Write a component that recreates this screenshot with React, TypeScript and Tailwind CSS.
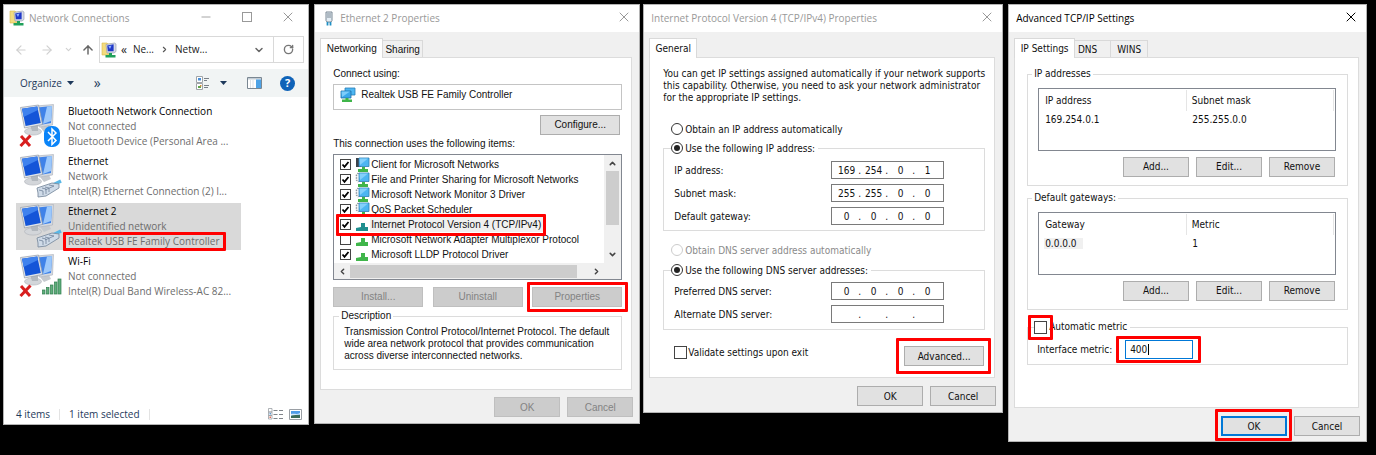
import type { ReactNode } from 'react';
import {
  ArrowLeft,
  ArrowRight,
  ArrowUp,
  ChevronDown,
  ChevronLeft,
  ChevronRight,
  ChevronUp,
  Minus,
  RotateCw,
  X,
} from 'lucide-react';

const SHELL_FONT = "font-['Open_Sans',sans-serif]";
const TAHOMA = "font-['DejaVu_Sans_Condensed','DejaVu_Sans',sans-serif]";
const MS_SANS = "font-['Liberation_Sans',sans-serif]";

type BadgeKind = 'bluetooth' | 'cable' | 'signal';

const adapters: {
  name: string;
  status: string;
  device: string;
  badge: BadgeKind;
  offline?: boolean;
  selected?: boolean;
}[] = [
  {
    name: 'Bluetooth Network Connection',
    status: 'Not connected',
    device: 'Bluetooth Device (Personal Area ...',
    badge: 'bluetooth',
    offline: true,
  },
  { name: 'Ethernet', status: 'Network', device: 'Intel(R) Ethernet Connection (2) I...', badge: 'cable' },
  {
    name: 'Ethernet 2',
    status: 'Unidentified network',
    device: 'Realtek USB FE Family Controller',
    badge: 'cable',
    selected: true,
  },
  {
    name: 'Wi-Fi',
    status: 'Not connected',
    device: 'Intel(R) Dual Band Wireless-AC 82...',
    badge: 'signal',
    offline: true,
  },
];

const items: { label: string; kind: 'client' | 'service' | 'protocol'; checked: boolean; active?: boolean }[] = [
  { label: 'Client for Microsoft Networks', kind: 'client', checked: true },
  { label: 'File and Printer Sharing for Microsoft Networks', kind: 'service', checked: true },
  { label: 'Microsoft Network Monitor 3 Driver', kind: 'service', checked: true },
  { label: 'QoS Packet Scheduler', kind: 'service', checked: true },
  { label: 'Internet Protocol Version 4 (TCP/IPv4)', kind: 'protocol', checked: true, active: true },
  { label: 'Microsoft Network Adapter Multiplexor Protocol', kind: 'protocol', checked: false },
  { label: 'Microsoft LLDP Protocol Driver', kind: 'protocol', checked: true },
];

/* ---------- icons ---------- */

function FolderNetIcon() {
  return (
    <svg viewBox="0 0 16 16" className="size-4 shrink-0">
      <path d="M1 1h5l1 1h3v11H1z" fill="#f3dc7e" stroke="#d9b84a" strokeWidth=".6" />
      <path d="M5 2.5 13.5 1l1.5 1v7.5l-2 1.5H6z" fill="#d6dbe8" stroke="#8d95a8" strokeWidth=".6" />
      <path d="M6.2 3.4 12.6 2.3v6.9H6.8z" fill="#2038c8" />
      <path d="M7.4 4.2 10.6 3.4 9 6.9z" fill="#8fb2ff" />
      <path d="M8 11h3v2h3.5v2.5h-10V13H8z" fill="#1fa05a" />
    </svg>
  );
}

function AdapterIcon({ badge, offline }: { badge: BadgeKind; offline?: boolean }) {
  return (
    <svg viewBox="0 0 46 46" className="h-[46px] w-[46px] shrink-0">
      <ellipse cx="15" cy="28.500" rx="8.500" ry="3.600" fill="#d3d6da" stroke="#aeb2b8" strokeWidth=".6" />
      <path d="M12 22h8v6h-6z" fill="#b3b8be" />
      <path d="m22 24 9-2 2 4-7 3z" fill="#c5c9ce" />
      <path d="M18 3 35.500 1.500 34.500 22 21 24z" fill="#d5dae0" stroke="#a9afb8" strokeWidth=".6" />
      <path d="M19.500 4.500 34 3 33 20 22 22z" fill="#3f82e8" />
      <path d="M29 3.500 34 3 33 18 25 21z" fill="#9cc8fb" />
      <path d="M2.500 4.500 20.500 2 24.500 21.500 6.500 25z" fill="#e2e6ea" stroke="#959ca6" strokeWidth=".7" />
      <path d="M4 5.800 19.300 3.600 22.800 20 7.600 23z" fill="#1455d8" />
      <path d="M4 5.800 19.300 3.600 20 7 5.600 14z" fill="#3f82ee" />
      {badge === 'bluetooth' && (
        <>
          <rect x="26" y="23" width="16" height="21" rx="7" fill="#0a84f8" />
          <path d="m30 29 8 8.500-4 4V26l4 4-8 8" fill="none" stroke="#fff" strokeWidth="1.500" />
        </>
      )}
      {badge === 'cable' && (
        <>
          <path d="m35 32 8-4" stroke="#58b7e6" strokeWidth="3.500" />
          <path d="m19 35 15-5 7 1v4l-13 8-8 1v-4z" fill="#cfdbe8" stroke="#7d8da0" strokeWidth=".9" />
          <path
            d="m21 37 4 1v4M24 35l4 1v5M27 34l4 1v4M31 32l5 1-9 4"
            fill="none"
            stroke="#71839a"
            strokeWidth=".8"
          />
        </>
      )}
      {badge === 'signal' && (
        <g fill="#5fae7b" stroke="#2f7d4d" strokeWidth=".7">
          <rect x="24.500" y="37" width="2.500" height="4" />
          <rect x="28.500" y="34.500" width="2.500" height="6.500" />
          <rect x="32.500" y="32" width="2.500" height="9" />
          <rect x="36.500" y="29" width="2.500" height="12" />
          <rect x="40" y="26" width="3" height="15" />
        </g>
      )}
      {offline && <path d="m3 33 9 10M12.500 32.500 2.500 43" stroke="#d81e1e" strokeWidth="3" />}
    </svg>
  );
}

function ItemIcon({ kind, active }: { kind: 'client' | 'service' | 'protocol'; active?: boolean }) {
  if (kind === 'protocol') {
    return (
      <svg viewBox="0 0 15 15" className="size-[15px] shrink-0">
        <path d="M6 6h4v4h3v4H1v-3l5-1z" fill={active ? '#1f8f8f' : '#3fb54a'} />
      </svg>
    );
  }
  return (
    <svg viewBox="0 0 15 15" className="size-[15px] shrink-0">
      {kind === 'client' ? (
        <path d="M1 1h5v9H1z" fill="#3c434b" />
      ) : (
        <path d="M3.500 1 1.500 3v5l2 2" fill="none" stroke="#8c949c" strokeWidth="1.500" strokeDasharray="1.500 1" />
      )}
      <path d="M4 1h10v8.500H4z" fill="#4db6f2" stroke="#2d7db4" strokeWidth=".8" />
      <path d="M4.500 1.500H13L5 8z" fill="#83d0fb" />
      <path d="M7 10h3v2h3v3H3v-3h4z" fill="#3fb54a" />
    </svg>
  );
}

function AdapterSmallIcon() {
  return (
    <svg viewBox="0 0 16 16" className="size-4 shrink-0">
      <path d="M5 1h10v7H5z" fill="#4db6f2" stroke="#2a7fb8" strokeWidth=".8" />
      <path d="M1 4h10v7H1z" fill="#3ba7ea" stroke="#1f6fa8" strokeWidth=".8" />
      <path d="M1.500 4.500H10L2 10z" fill="#7dcdfb" />
      <path d="M5.500 11h3v1.500H12V15H2v-2.500h3.500z" fill="#3fb54a" />
    </svg>
  );
}

function PlugIcon() {
  return (
    <svg viewBox="0 0 14 16" className="h-4 w-[14px] shrink-0">
      <path d="M4 1h6v8.500L9 11H5L4 9.500z" fill="#e4edf4" stroke="#7a8894" />
      <path d="M6 2v5M8 2v5" stroke="#7a8894" />
      <path d="M5.500 11v3.500M8.500 11v3.500" stroke="#1f8fc4" strokeWidth="1.800" />
    </svg>
  );
}

function ViewIcon() {
  return (
    <svg viewBox="0 0 14 14" className="size-[14px]">
      <path d="M.5.5h6v6h-6zM.5 7.500h6v6h-6z" fill="#fff" stroke="#a0a4a8" />
      <path d="M2 2h3v2.500H2z" fill="#4a90d9" />
      <path d="M2 10h3v2H2z" fill="#5da548" />
      <path d="M4 9h1.500v1.500H4z" fill="#d98b3a" />
      <path d="M8 2.500h5M8 4.500h3M8 9.500h5M8 11.500h4" stroke="#7a8087" />
    </svg>
  );
}

function PaneIcon() {
  return (
    <svg viewBox="0 0 15 12" className="h-3 w-[15px]">
      <path d="M.5.5h14v11H.5z" fill="#fff" stroke="#7a8792" />
      <path d="M1 1h13v1.500H1z" fill="#c3ccd4" />
      <path d="M9 2.500h5V11H9z" fill="#4fa3e6" />
      <path d="M3.500 3v8M6 3v8" stroke="#dde2e6" />
    </svg>
  );
}

function DetailsIcon() {
  return (
    <svg viewBox="0 0 15 12" className="h-3 w-[15px]">
      <path
        d="M.5.5h3.500v3.500H.5zM.5 4h3.500v3.500H.5zM.5 7.500h3.500v3.500H.5z"
        fill="#fff"
        stroke="#9a9fa4"
        strokeWidth=".8"
      />
      <path d="M1.500 5h1.500v1.500H1.500z" fill="#5b9bd5" />
      <path d="M1.500 8.500h1.500V10H1.500z" fill="#e06a50" />
      <path d="M5.500 2.500h4M11 2.500h4M5.500 6.500h4M11 6.500h4M5.500 10.500h4M11 10.500h4" stroke="#7f8489" />
    </svg>
  );
}

function TilesIcon() {
  return (
    <svg viewBox="0 0 13 11" className="h-[11px] w-[13px]">
      <path d="M.5.5h12v10H.5z" fill="#fff" stroke="#9a9fa4" />
      <path d="M2 2h9v7H2z" fill="#4f9de8" />
      <path d="M2 7c3-2.500 5-.5 9-1v3H2z" fill="#3a6b58" />
      <path d="M2 5c3-1 6 1 9-1v1.500L2 6.500z" fill="#d6ebfb" />
    </svg>
  );
}

function CaretIcon() {
  return (
    <svg viewBox="0 0 7 4" className="h-1 w-[7px]">
      <path d="M0 0h7L3.500 4z" fill="#1e395b" />
    </svg>
  );
}

/* ---------- shared controls ---------- */

function Marked({ children, pad, className = '' }: { children: ReactNode; pad: string; className?: string }) {
  return (
    <span className={`relative inline-flex ${className}`}>
      {children}
      <span className={`pointer-events-none absolute z-10 rounded-[1px] border-[3px] border-[#ff0000] ${pad}`} />
    </span>
  );
}

function Btn({
  children,
  width = 'w-[66px]',
  disabled,
  primary,
}: {
  children: ReactNode;
  width?: string;
  disabled?: boolean;
  primary?: boolean;
}) {
  const look = disabled
    ? 'border border-[#bfbfbf] bg-[#cccccc] text-[#838383]'
    : primary
      ? 'border-2 border-[#0078d7] bg-[#e1e1e1]'
      : 'border border-[#adadad] bg-[#e1e1e1]';
  return (
    <button type="button" disabled={disabled} className={`flex h-5 items-center justify-center ${width} ${look}`}>
      {children}
    </button>
  );
}

function CheckBox({ id, checked, size = 'size-[13px]' }: { id: string; checked?: boolean; size?: string }) {
  return (
    <span className={`grid shrink-0 ${size}`}>
      <input
        id={id}
        type="checkbox"
        defaultChecked={checked}
        className="peer col-start-1 row-start-1 size-full appearance-none border border-[#444] bg-white"
      />
      <svg
        viewBox="0 0 11 11"
        className="pointer-events-none invisible col-start-1 row-start-1 size-full peer-checked:visible"
      >
        <path d="m2.500 5.500 2 2.300 4-4.800" fill="none" stroke="#000" strokeWidth="1.800" />
      </svg>
    </span>
  );
}

function Radio({
  name,
  label,
  checked,
  disabled,
}: {
  name: string;
  label: string;
  checked?: boolean;
  disabled?: boolean;
}) {
  return (
    <label className={`flex h-4 items-center gap-[2px] ${disabled ? 'text-[#8a8a8a]' : ''}`}>
      <span className="grid size-3 place-items-center">
        <input
          type="radio"
          name={name}
          defaultChecked={checked}
          disabled={disabled}
          className="peer col-start-1 row-start-1 size-3 appearance-none rounded-full border border-[#333] bg-white disabled:border-[#cccccc]"
        />
        <span className="pointer-events-none invisible col-start-1 row-start-1 size-[6px] rounded-full bg-[#222] peer-checked:visible" />
      </span>
      {label}
    </label>
  );
}

function Dialog({
  title,
  icon,
  active,
  className,
  children,
}: {
  title: string;
  icon?: ReactNode;
  active?: boolean;
  className: string;
  children: ReactNode;
}) {
  return (
    <section className={`min-w-0 basis-0 border border-[#b4b4b4] bg-[#f0f0f0] text-[10px] text-[#111] ${className}`}>
      <header
        className={`flex h-[27px] items-center gap-1 bg-white pr-[7px] pl-[7px] ${SHELL_FONT} ${
          active ? 'text-black' : 'text-[#999]'
        }`}
      >
        {icon}
        <h2 className="flex-1 truncate">{title}</h2>
        <button type="button" aria-label="Close" className="pb-[3px]">
          <X className="size-4" strokeWidth={1.5} />
        </button>
      </header>
      {children}
    </section>
  );
}

function Tabs({ tabs }: { tabs: { label: string; width: string }[] }) {
  return (
    <div role="tablist" className="ml-[5px] flex items-end pt-[6px]">
      {tabs.map((tab, i) => (
        <button
          key={tab.label}
          type="button"
          role="tab"
          aria-selected={i === 0}
          className={`${tab.width} ${
            i === 0
              ? 'relative -mb-px h-5 border border-b-0 border-[#d9d9d9] bg-white pb-[1px]'
              : 'h-[17px] border border-b-0 border-l-0 border-[#d9d9d9] bg-[#f0f0f0]'
          }`}
        >
          {tab.label}
        </button>
      ))}
    </div>
  );
}

function IpField({ id, label, value }: { id: string; label: string; value: string[] }) {
  return (
    <div className="flex items-center justify-between">
      <label htmlFor={`${id}-0`}>{label}</label>
      <div className="flex h-[18px] w-[113px] items-center border border-[#7a7a7a] bg-white pl-[3px]">
        {value.map((octet, i) => (
          <span key={i} className="flex min-w-0 flex-1 items-center">
            <input
              id={`${id}-${i}`}
              aria-label={`${label} ${i + 1}`}
              defaultValue={octet}
              className="w-0 min-w-0 flex-1 bg-transparent text-center outline-none"
            />
            <span className="w-1">{i < 3 ? '.' : ''}</span>
          </span>
        ))}
      </div>
    </div>
  );
}

/* ---------- windows ---------- */

function NetworkConnections() {
  return (
    <section
      className={`mr-[5px] flex min-w-0 grow-[306] basis-0 flex-col border border-[#b4b4b4] bg-white text-[10px] ${SHELL_FONT}`}
    >
      <header className="flex h-[26px] items-center pl-[5px] text-[#999]">
        <FolderNetIcon />
        <h2 className="ml-1 flex-1 truncate">Network Connections</h2>
        <button type="button" aria-label="Minimize" className="flex w-[41px] justify-center pb-[2px]">
          <Minus className="size-[14px]" strokeWidth={1.5} />
        </button>
        <button type="button" aria-label="Maximize" className="flex w-[41px] justify-center pb-[2px]">
          <span className="size-[10px] border border-[#999]" />
        </button>
        <button type="button" aria-label="Close" className="flex w-[41px] justify-center pb-[2px]">
          <X className="size-4" strokeWidth={1.5} />
        </button>
      </header>

      <nav className="mt-[5px] flex h-[27px] items-center pr-1 pl-[10px] text-[#222]">
        <button type="button" aria-label="Back" disabled className="text-[#d0d0d0]">
          <ArrowLeft className="size-[14px]" strokeWidth={2} />
        </button>
        <button type="button" aria-label="Forward" disabled className="ml-3 text-[#d0d0d0]">
          <ArrowRight className="size-[14px]" strokeWidth={2} />
        </button>
        <button type="button" aria-label="Recent locations" disabled className="ml-[10px] text-[#d0d0d0]">
          <ChevronDown className="size-[9px]" strokeWidth={3} />
        </button>
        <button type="button" aria-label="Up" className="ml-2 text-[#666]">
          <ArrowUp className="size-[14px]" strokeWidth={2.5} />
        </button>
        <div className="ml-1 flex h-full flex-1 items-center border border-[#d9d9d9] pl-[1px]">
          <FolderNetIcon />
          <span className="ml-1 text-xs leading-3">«</span>
          <span className="ml-[6px]">Ne...</span>
          <ChevronRight className="mx-[6px] size-[9px] text-[#555]" strokeWidth={3} />
          <span className="flex-1">Netw...</span>
          <button type="button" aria-label="Previous locations" className="mr-2 text-[#666]">
            <ChevronDown className="size-3" strokeWidth={3} />
          </button>
          <button
            type="button"
            aria-label="Refresh"
            className="flex h-full w-[30px] items-center justify-center border-l border-[#d9d9d9] text-[#777]"
          >
            <RotateCw className="size-[11px]" strokeWidth={3} />
          </button>
        </div>
      </nav>

      <div className="mt-[6px] flex h-7 items-center bg-[#f1f4f4] pr-[13px] pl-4 text-[#1e395b]">
        <button type="button" className="flex items-center gap-[5px]">
          Organize <CaretIcon />
        </button>
        <button type="button" aria-label="More" className="ml-5 text-sm leading-[14px]">
          »
        </button>
        <span className="flex-1" />
        <button type="button" aria-label="Change your view" className="flex items-center gap-[10px]">
          <ViewIcon />
          <CaretIcon />
        </button>
        <button type="button" aria-label="Preview pane" className="ml-5">
          <PaneIcon />
        </button>
        <button
          type="button"
          aria-label="Help"
          className="ml-[18px] flex size-[15px] items-center justify-center rounded-full bg-[#0f63b8] text-[11px] font-bold text-white"
        >
          ?
        </button>
      </div>

      <ul className="flex flex-col gap-[3px] pt-[6px] pr-[67px] pb-[106px] pl-3">
        {adapters.map((a) => (
          <li
            key={a.name}
            className={`flex h-[47px] gap-1 pl-[2px] leading-[15px] whitespace-nowrap text-[#6d6d6d] ${
              a.selected ? 'bg-[#d9d9d9]' : ''
            }`}
          >
            <AdapterIcon badge={a.badge} offline={a.offline} />
            <div className="pt-px">
              <p className="text-black">{a.name}</p>
              <p>{a.status}</p>
              {a.selected ? (
                <Marked pad="-top-[2px] -bottom-[2px] -left-[5px] -right-[6px]" className="align-top">
                  {a.device}
                </Marked>
              ) : (
                <p>{a.device}</p>
              )}
            </div>
          </li>
        ))}
      </ul>

      <footer className="flex h-[18px] items-center pr-[6px] pb-[2px] pl-3 text-[#1e395b]">
        <span>4 items</span>
        <span className="mx-[9px] h-[11px] w-px bg-[#e3e3e3]" />
        <span>1 item selected</span>
        <span className="mx-[9px] h-[11px] w-px bg-[#e3e3e3]" />
        <span className="flex-1" />
        <button type="button" aria-label="Details view">
          <DetailsIcon />
        </button>
        <button type="button" aria-label="Large icons view" className="ml-[6px]">
          <TilesIcon />
        </button>
      </footer>
    </section>
  );
}

function EthernetProperties() {
  return (
    <Dialog title="Ethernet 2 Properties" icon={<PlugIcon />} className="mr-[3px] grow-[326]">
      <div className={MS_SANS}>
        <Tabs
          tabs={[
            { label: 'Networking', width: 'w-[63px]' },
            { label: 'Sharing', width: 'w-10' },
          ]}
        />
        <div className="mr-[7px] ml-[5px] border border-[#dcdcdc] bg-white pt-[9px] pr-[9px] pb-[19px] pl-3 leading-[14px]">
          <p>Connect using:</p>
          <div className="mt-[3px] flex h-[26px] items-center gap-[5px] border border-[#c4c4c4] pb-1 pl-[6px]">
            <AdapterSmallIcon />
            Realtek USB FE Family Controller
          </div>
          <div className="mt-[5px] flex justify-end pr-[2px]">
            <Btn width="w-20">Configure...</Btn>
          </div>
          <p className="mt-[2px]">This connection uses the following items:</p>

          <div className="mt-[3px] border border-[#828790]">
            <div className="flex">
              <ul className="min-w-0 flex-1 pt-[2px] pb-px pl-[6px]">
                {items.map((item, i) => {
                  const row = (
                    <>
                      <CheckBox id={`item-${i}`} checked={item.checked} size="size-[11px]" />
                      <span className="ml-1 flex">
                        <ItemIcon kind={item.kind} active={item.active} />
                      </span>
                      <label
                        htmlFor={`item-${i}`}
                        className={`h-[15px] pr-1 pl-px leading-[15px] whitespace-nowrap ${
                          item.active ? 'bg-[#f0f0f0]' : ''
                        }`}
                      >
                        {item.label}
                      </label>
                    </>
                  );
                  return (
                    <li key={item.label} className="flex h-[15px] items-center">
                      {item.active ? (
                        <Marked pad="-top-[3px] -bottom-[4px] -left-[4px] -right-[1px]" className="items-center">
                          {row}
                        </Marked>
                      ) : (
                        row
                      )}
                    </li>
                  );
                })}
              </ul>
              <div className="flex w-[17px] flex-col items-center bg-[#f0f0f0] py-1 text-[#444]">
                <ChevronUp className="size-[9px]" strokeWidth={4} />
                <span className="mt-[3px] h-[54px] w-[13px] bg-[#cdcdcd]" />
                <span className="flex-1" />
                <ChevronDown className="size-[9px]" strokeWidth={4} />
              </div>
            </div>
            <div className="flex h-4 items-center bg-[#f0f0f0] pr-5 pl-1 text-[#444]">
              <ChevronLeft className="size-[9px]" strokeWidth={4} />
              <span className="mr-[15px] ml-[3px] h-[13px] flex-1 bg-[#cdcdcd]" />
              <ChevronRight className="size-[9px]" strokeWidth={4} />
            </div>
          </div>

          <div className="mt-[7px] flex justify-between">
            <Btn width="w-[90px]" disabled>
              Install...
            </Btn>
            <Btn width="w-[90px]" disabled>
              Uninstall
            </Btn>
            <Marked pad="-top-[5px] -bottom-[5px] -left-[5px] -right-[6px]">
              <Btn width="w-[90px]" disabled>
                Properties
              </Btn>
            </Marked>
          </div>

          <fieldset className="mt-[2px] min-w-0 border border-[#dcdcdc]">
            <legend className="ml-[5px] px-[2px]">Description</legend>
            <p className="pt-[3px] pr-2 pb-[7px] pl-[10px] leading-[12px]">
              Transmission Control Protocol/Internet Protocol. The default
              <br />
              wide area network protocol that provides communication
              <br />
              across diverse interconnected networks.
            </p>
          </fieldset>
        </div>
        <div className="flex justify-end gap-[7px] px-[6px] pt-[7px] pb-[6px]">
          <Btn disabled>OK</Btn>
          <Btn disabled>Cancel</Btn>
        </div>
      </div>
    </Dialog>
  );
}

function Ipv4Properties() {
  return (
    <Dialog title="Internet Protocol Version 4 (TCP/IPv4) Properties" className="mr-[5px] grow-[360]">
      <div className={TAHOMA}>
        <Tabs tabs={[{ label: 'General', width: 'w-[48px]' }]} />
        <div className="mr-[7px] ml-[5px] border border-[#dcdcdc] bg-white pt-[10px] pr-[9px] pb-[11px] pl-[13px]">
          <p className="leading-[12px] whitespace-nowrap">
            You can get IP settings assigned automatically if your network supports
            <br />
            this capability. Otherwise, you need to ask your network administrator
            <br />
            for the appropriate IP settings.
          </p>

          <div className="mt-[17px] ml-2">
            <Radio name="ip" label="Obtain an IP address automatically" />
          </div>
          <fieldset className="mt-[3px] min-w-0 border border-[#dcdcdc]">
            <legend className="ml-[7px] pr-[3px]">
              <Radio name="ip" label="Use the following IP address:" checked />
            </legend>
            <div className="flex flex-col gap-[5px] pt-[5px] pr-10 pb-[5px] pl-[10px]">
              <IpField id="ip" label="IP address:" value={['169', '254', '0', '1']} />
              <IpField id="mask" label="Subnet mask:" value={['255', '255', '0', '0']} />
              <IpField id="gateway" label="Default gateway:" value={['0', '0', '0', '0']} />
            </div>
          </fieldset>

          <div className="mt-[11px] ml-2">
            <Radio name="dns" label="Obtain DNS server address automatically" disabled />
          </div>
          <fieldset className="mt-1 min-w-0 border border-[#dcdcdc]">
            <legend className="ml-[7px] pr-[3px]">
              <Radio name="dns" label="Use the following DNS server addresses:" checked />
            </legend>
            <div className="flex flex-col gap-[5px] pt-1 pr-10 pb-[6px] pl-[10px]">
              <IpField id="dns1" label="Preferred DNS server:" value={['0', '0', '0', '0']} />
              <IpField id="dns2" label="Alternate DNS server:" value={['', '', '', '']} />
            </div>
          </fieldset>

          <div className="mt-[14px] flex items-start justify-between pl-[11px]">
            <div className="flex h-4 items-center gap-[1px]">
              <CheckBox id="validate" />
              <label htmlFor="validate">Validate settings upon exit</label>
            </div>
            <Marked pad="-top-2 -bottom-2 -left-2 -right-[7px]" className="mt-[2px] mr-px">
              <Btn width="w-20">Advanced...</Btn>
            </Marked>
          </div>
        </div>
        <div className="flex justify-end gap-[7px] px-[6px] pt-2 pb-[6px]">
          <Btn>OK</Btn>
          <Btn>Cancel</Btn>
        </div>
      </div>
    </Dialog>
  );
}

function AddressGroup({
  legend,
  head,
  row,
  highlight,
  className = '',
}: {
  legend: string;
  head: [string, string];
  row: [string, string];
  highlight?: boolean;
  className?: string;
}) {
  return (
    <fieldset className={`min-w-0 border border-[#dcdcdc] ${className}`}>
      <legend className="ml-1 px-[2px]">{legend}</legend>
      <div className="pt-[7px] pr-[11px] pb-2 pl-[10px]">
        <div className="h-[63px] border border-[#828790] pt-px pr-px">
          <table className="w-full table-fixed border-collapse text-left">
            <thead>
              <tr className="h-[21px]">
                <th className="border-r border-[#e5e5e5] pl-[6px] font-normal">{head[0]}</th>
                <th className="border-r border-[#e5e5e5] pl-[5px] font-normal">{head[1]}</th>
              </tr>
            </thead>
            <tbody>
              <tr className="h-[17px]">
                <td className="pl-[5px]">
                  <span className={highlight ? 'bg-[#f0f0f0] pr-[6px] pl-px' : 'pl-px'}>{row[0]}</span>
                </td>
                <td className="pl-[6px]">{row[1]}</td>
              </tr>
            </tbody>
          </table>
        </div>
        <div className="mt-[6px] flex justify-end gap-[7px] pr-px">
          <Btn>Add...</Btn>
          <Btn>Edit...</Btn>
          <Btn>Remove</Btn>
        </div>
      </div>
    </fieldset>
  );
}

function AdvancedSettings() {
  return (
    <Dialog title="Advanced TCP/IP Settings" active className="grow-[359]">
      <div className={TAHOMA}>
        <Tabs
          tabs={[
            { label: 'IP Settings', width: 'w-[61px]' },
            { label: 'DNS', width: 'w-[36px] pr-[10px]' },
            { label: 'WINS', width: 'w-[37px]' },
          ]}
        />
        <div className="mr-[7px] ml-[5px] border border-[#dcdcdc] bg-white pt-[9px] pr-[10px] pb-[42px] pl-3 leading-[14px]">
          <AddressGroup legend="IP addresses" head={['IP address', 'Subnet mask']} row={['169.254.0.1', '255.255.0.0']} />
          <AddressGroup
            legend="Default gateways:"
            head={['Gateway', 'Metric']}
            row={['0.0.0.0', '1']}
            highlight
            className="mt-[5px]"
          />
          <fieldset className="mt-[10px] min-w-0 border border-[#dcdcdc]">
            <legend className="ml-[6px] pr-[3px]">
              <span className="flex items-center gap-[2px]">
                <Marked pad="-top-[6px] -bottom-[6px] -left-[6px] -right-[6px]">
                  <CheckBox id="auto-metric" />
                </Marked>
                <label htmlFor="auto-metric">Automatic metric</label>
              </span>
            </legend>
            <div className="flex items-center pt-[6px] pb-[5px] pl-[9px]">
              <label htmlFor="metric" className="w-[88px]">
                Interface metric:
              </label>
              <Marked pad="-top-[4px] -bottom-[4px] -left-[9px] -right-[8px]">
                <input
                  id="metric"
                  defaultValue="400"
                  className="h-[19px] w-[68px] border border-[#0078d7] bg-white pl-1 outline-none"
                />
                {/* text caret after the value */}
                <span className="pointer-events-none absolute top-1 left-[23px] h-[11px] w-px bg-black" />
              </Marked>
            </div>
          </fieldset>
        </div>
        <div className="flex justify-end gap-[7px] px-[6px] pt-2 pb-[5px]">
          <Marked pad="-top-[7px] -bottom-[5px] -left-[6px] -right-[5px]">
            <Btn primary>OK</Btn>
          </Marked>
          <Btn>Cancel</Btn>
        </div>
      </div>
    </Dialog>
  );
}

export default function App() {
  return (
    <main className="flex min-h-screen items-start bg-black pt-1 pr-[9px] pl-[3px]">
      <NetworkConnections />
      <EthernetProperties />
      <Ipv4Properties />
      <AdvancedSettings />
    </main>
  );
}
